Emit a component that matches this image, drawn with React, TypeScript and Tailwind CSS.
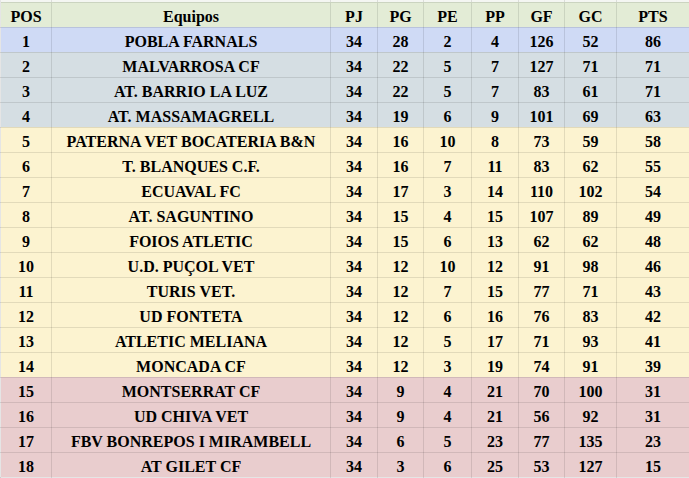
import React from 'react';

type Row = [number, string, number, number, number, number, number, number, number];

const rows: Row[] = [
  [1, 'POBLA FARNALS', 34, 28, 2, 4, 126, 52, 86],
  [2, 'MALVARROSA CF', 34, 22, 5, 7, 127, 71, 71],
  [3, 'AT. BARRIO LA LUZ', 34, 22, 5, 7, 83, 61, 71],
  [4, 'AT. MASSAMAGRELL', 34, 19, 6, 9, 101, 69, 63],
  [5, 'PATERNA VET BOCATERIA B&N', 34, 16, 10, 8, 73, 59, 58],
  [6, 'T. BLANQUES C.F.', 34, 16, 7, 11, 83, 62, 55],
  [7, 'ECUAVAL FC', 34, 17, 3, 14, 110, 102, 54],
  [8, 'AT. SAGUNTINO', 34, 15, 4, 15, 107, 89, 49],
  [9, 'FOIOS ATLETIC', 34, 15, 6, 13, 62, 62, 48],
  [10, 'U.D. PUÇOL VET', 34, 12, 10, 12, 91, 98, 46],
  [11, 'TURIS VET.', 34, 12, 7, 15, 77, 71, 43],
  [12, 'UD FONTETA', 34, 12, 6, 16, 76, 83, 42],
  [13, 'ATLETIC MELIANA', 34, 12, 5, 17, 71, 93, 41],
  [14, 'MONCADA CF', 34, 12, 3, 19, 74, 91, 39],
  [15, 'MONTSERRAT CF', 34, 9, 4, 21, 70, 100, 31],
  [16, 'UD CHIVA VET', 34, 9, 4, 21, 56, 92, 31],
  [17, 'FBV BONREPOS I MIRAMBELL', 34, 6, 5, 23, 77, 135, 23],
  [18, 'AT GILET CF', 34, 3, 6, 25, 53, 127, 15],
];

const headers = ['POS', 'Equipos', 'PJ', 'PG', 'PE', 'PP', 'GF', 'GC', 'PTS'];
const widths = ['w-[51px]', 'w-[279px]', 'w-[47px]', 'w-[46px]', 'w-[48px]', 'w-[47px]', 'w-[46px]', 'w-[52px]', 'w-[73px]'];

function rowBg(pos: number) {
  if (pos === 1) return 'bg-[#cfdaf5]';
  if (pos <= 4) return 'bg-[#d5dee3]';
  if (pos <= 14) return 'bg-[#fcf3d0]';
  return 'bg-[#e9cdce]';
}

const cell = 'border border-black/10 p-0 pt-[4px] leading-none whitespace-nowrap';

export default function App() {
  return (
    <div className="w-[689px] h-[478px] overflow-hidden bg-white">
      <table className="table-fixed border-collapse w-[689px] font-['Liberation_Serif',serif] text-[16px] font-bold text-black text-center">
        <colgroup>
          {widths.map((w, i) => (
            <col key={i} className={w} />
          ))}
        </colgroup>
        <tbody>
          <tr className="h-[2px] bg-[#f4f6f2]">
            {headers.map((h) => (
              <td key={h} className="border-x border-black/10 p-0" />
            ))}
          </tr>
          <tr className="h-[25px] bg-[#e3ecd6]">
            {headers.map((h) => (
              <td key={h} className={cell}>
                {h}
              </td>
            ))}
          </tr>
          {rows.map((r) => (
            <tr key={r[0]} className={`h-[25px] ${rowBg(r[0])}`}>
              {r.map((v, i) => (
                <td key={i} className={cell}>
                  {v}
                </td>
              ))}
            </tr>
          ))}
        </tbody>
      </table>
    </div>
  );
}
